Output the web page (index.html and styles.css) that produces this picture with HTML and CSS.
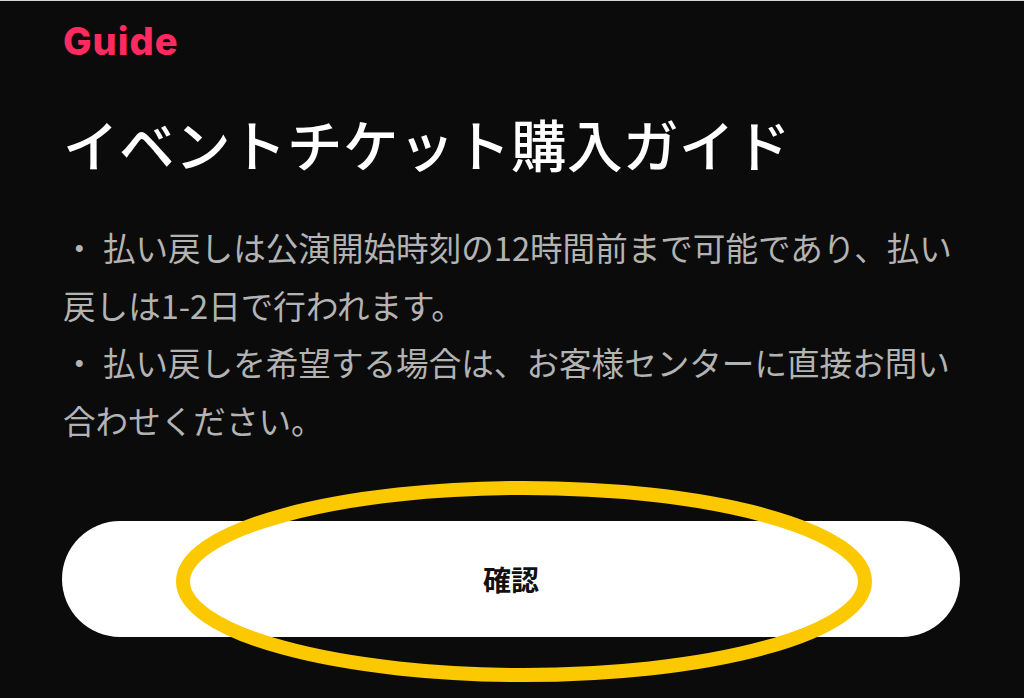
FILE: index.html
```html
<!DOCTYPE html>
<html lang="ja">
<head>
<meta charset="utf-8">
<title>Guide</title>
<link rel="stylesheet" href="styles.css">
</head>
<body>
<main class="page">
  <div class="eyebrow">Guide</div>
  <h1 class="title">イベントチケット購入ガイド</h1>
  <div class="notes">
    <p class="note">・ 払い戻しは公演開始時刻の12時間前まで可能であり、払い戻しは1-2日で行われます。</p>
    <p class="note">・ 払い戻しを希望する場合は、お客様センターに直接お問い合わせください。</p>
  </div>
  <div class="action">
    <button class="confirm" type="button">確認</button>
    <svg class="highlight" width="696" height="201" viewBox="0 0 696 201" aria-hidden="true">
      <ellipse cx="348" cy="100.5" rx="341" ry="93.5" fill="none" stroke="#fcc800" stroke-width="14"/>
    </svg>
  </div>
</main>
</body>
</html>
```

FILE: styles.css
```css
html, body {
  margin: 0;
  padding: 0;
  background: #0b0b0b;
}

body {
  border-top: 1px solid #d6d6d6;
  height: 697px;
  overflow: hidden;
  font-family: "Noto Sans CJK JP", "Noto Sans", sans-serif;
}

.page {
  padding: 17px 63px 0 63px;
  display: flex;
  flex-direction: column;
}

.eyebrow {
  font-family: "Inter", "Noto Sans", sans-serif;
  font-weight: 800;
  font-size: 38px;
  line-height: 46px;
  color: #ff2a5f;
  letter-spacing: 1px;
}

.title {
  margin: 44px 0 0 0;
  font-size: 55.5px;
  line-height: 70px;
  font-weight: 500;
  color: #ffffff;
  letter-spacing: 0.5px;
}

.notes {
  margin-top: 40px;
}

.note {
  margin: 0;
  font-size: 32.6px;
  line-height: 57.7px;
  color: #b3b3b3;
  font-weight: 400;
}

.action {
  position: relative;
  margin-top: 72px;
  width: 898px;
  margin-left: -1px;
}

.confirm {
  display: flex;
  align-items: center;
  justify-content: center;
  width: 100%;
  height: 116px;
  border: none;
  border-radius: 58px;
  background: #ffffff;
  color: #111111;
  font-family: "Noto Sans CJK JP", sans-serif;
  font-weight: 700;
  font-size: 28px;
}

.highlight {
  position: absolute;
  left: 114px;
  top: -40px;
  pointer-events: none;
}
```
